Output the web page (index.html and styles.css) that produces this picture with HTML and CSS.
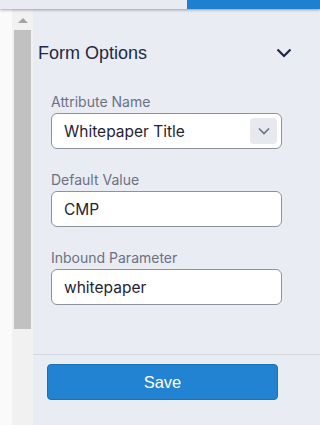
FILE: index.html
```html
<!DOCTYPE html>
<html lang="en">
<head>
  <meta charset="UTF-8" />
  <meta name="viewport" content="width=device-width, initial-scale=1.0"/>
  <title>Form Options</title>
  <link rel="stylesheet" href="styles.css">
</head>
<body>
  <div class="topbar">
    <div class="topbar-fill"></div>
    <div class="topbar-tab"></div>
  </div>

  <div class="main">
    <div class="gutter"></div>
    <div class="scrollbar">
      <div class="scroll-arrow"></div>
      <div class="scroll-thumb"></div>
    </div>

    <div class="panel">
      <div class="panel-header">
        <span class="panel-title">Form Options</span>
        <svg class="panel-toggle" width="16" height="10" viewBox="0 0 16 10">
          <polyline points="1.5,1.5 8,8 14.5,1.5" fill="none" stroke="#1c2740" stroke-width="2.2"/>
        </svg>
      </div>

      <div class="form">
        <div class="field">
          <label class="label">Attribute Name</label>
          <div class="select">
            <span class="select-value">Whitepaper Title</span>
            <span class="select-btn">
              <svg width="12" height="8" viewBox="0 0 12 8">
                <polyline points="1,1.5 6,6.5 11,1.5" fill="none" stroke="#6a7184" stroke-width="1.6"/>
              </svg>
            </span>
          </div>
        </div>

        <div class="field">
          <label class="label">Default Value</label>
          <input class="input" type="text" value="CMP">
        </div>

        <div class="field">
          <label class="label">Inbound Parameter</label>
          <input class="input" type="text" value="whitepaper">
        </div>
      </div>

      <div class="footer">
        <button class="btn-save">Save</button>
      </div>
    </div>
  </div>
</body>
</html>
```

FILE: styles.css
```css
body {
  margin: 0;
  width: 320px;
  height: 425px;
  overflow: hidden;
  background: #e9ecf3;
  font-family: 'Liberation Sans', Arial, sans-serif;
}

.topbar {
  display: flex;
  height: 9px;
  position: relative;
  z-index: 2;
  box-shadow: 0 1px 3px rgba(0,0,0,0.35);
}

.topbar-fill {
  flex: 1;
  background: #e9ebf2;
}

.topbar-tab {
  width: 133px;
  background: #1f80d1;
}

.main {
  display: flex;
  height: 416px;
}

.gutter {
  width: 12px;
  background: #fafafa;
}

.scrollbar {
  width: 21px;
  background: #f1f1f1;
  display: flex;
  flex-direction: column;
  align-items: center;
}

.scroll-arrow {
  width: 0;
  height: 0;
  margin-top: 9px;
  border-left: 5px solid transparent;
  border-right: 5px solid transparent;
  border-bottom: 5px solid #a3a3a3;
}

.scroll-thumb {
  width: 17px;
  height: 299px;
  margin-top: 7px;
  background: #c1c1c1;
}

.panel {
  flex: 1;
  background: #e9ecf3;
  display: flex;
  flex-direction: column;
}

.panel-header {
  display: flex;
  justify-content: space-between;
  align-items: center;
  padding: 33px 28px 0 5px;
  height: 22px;
}

.panel-title {
  font-size: 18px;
  line-height: 22px;
  color: #1f2a44;
}

.form {
  padding: 29px 38px 27px 18px;
  border-bottom: 1px solid #d3d6dd;
}

.field {
  margin-bottom: 22px;
}

.label {
  display: block;
  font-family: Inter, 'Liberation Sans', sans-serif;
  font-size: 14px;
  line-height: 18px;
  color: #6b7183;
  margin-bottom: 2px;
}

.input,
.select {
  box-sizing: border-box;
  width: 231px;
  height: 36px;
  border: 1px solid #8d929e;
  border-radius: 6px;
  background: #fff;
  font-family: Inter, 'Liberation Sans', sans-serif;
  font-size: 15.5px;
  color: #1f2333;
  padding: 0 12px;
  margin: 0;
  outline: none;
  display: block;
}

.select {
  display: flex;
  align-items: center;
  justify-content: space-between;
  padding-right: 4px;
}

.select-btn {
  width: 27px;
  height: 26px;
  border-radius: 4px;
  background: #e7e9ef;
  display: flex;
  align-items: center;
  justify-content: center;
}

.footer {
  padding: 9px 0 0 14px;
}

.btn-save {
  width: 231px;
  height: 36px;
  border: 1px solid #1b70bb;
  border-radius: 4px;
  background: #2183d1;
  color: #fff;
  font-family: 'Liberation Sans', Arial, sans-serif;
  font-size: 16.5px;
  cursor: pointer;
}
```
